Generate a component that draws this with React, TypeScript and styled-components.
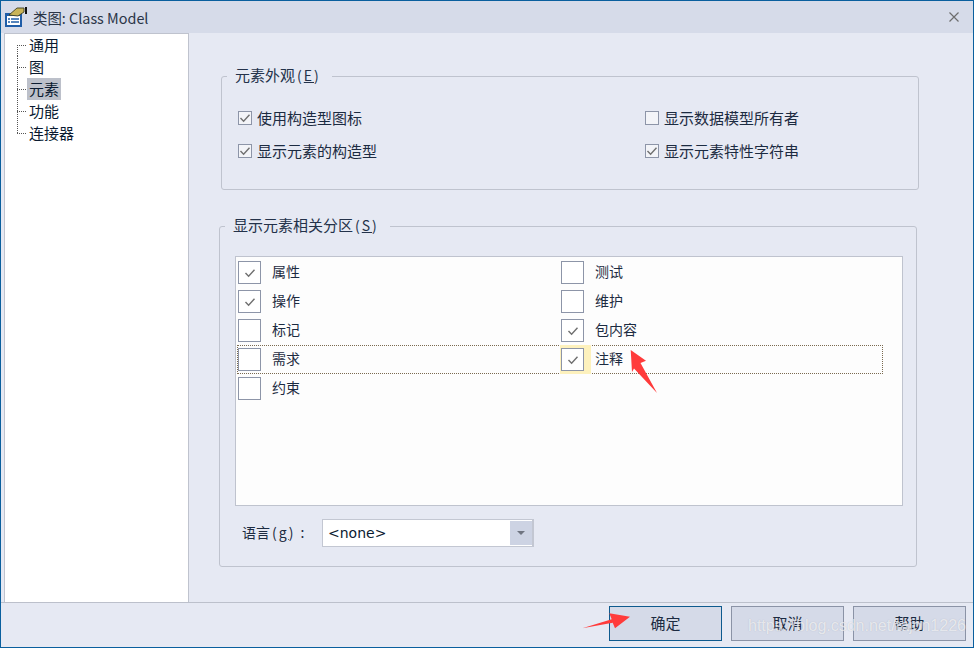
import styled, { createGlobalStyle } from "styled-components";

const GlobalStyle = createGlobalStyle`
  html, body {
    margin: 0;
    padding: 0;
    background: #e6e9f3;
  }
  * {
    box-sizing: border-box;
  }
`;

const Dialog = styled.div`
  position: relative;
  width: 974px;
  height: 648px;
  display: flex;
  flex-direction: column;
  background: #e6e9f3;
  border: 1px solid #0a5f9e;
  color: #1c2b41;
  font-family: "Noto Sans CJK SC", "Liberation Sans", sans-serif;
  font-size: 15px;
  overflow: hidden;
`;
const TitleBar = styled.div`
  height: 32px;
  flex: none;
  display: flex;
  align-items: center;
  padding: 0 14px 0 4px;
  background: #d6dbe9;
`;
const Title = styled.span`
  margin-left: 6px;
  flex: 1;
  color: #2a3547;
  font-family: "Noto Sans CJK SC", "Noto Sans", sans-serif;
  font-size: 14.4px;
`;
const Main = styled.div`
  flex: 1;
  display: flex;
  padding-left: 3px;
  min-height: 0;
`;
const Tree = styled.ul`
  width: 185px;
  flex: none;
  margin: 0;
  padding: 0 0 0 12px;
  list-style: none;
  background: #ffffff;
  border: 1px solid #bfc3ce;
  border-bottom: none;
  color: #0a1a30;
`;
const TreeRow = styled.li`
  height: 22px;
  display: flex;
  align-items: center;
`;
const Connector = styled.span<{ $part: "first" | "middle" | "last" }>`
  width: 10px;
  height: 22px;
  flex: none;
  background-image: repeating-linear-gradient(to right, #555 0 1px, transparent 1px 2px),
    repeating-linear-gradient(to bottom, #555 0 1px, transparent 1px 2px);
  background-repeat: no-repeat;
  background-size: 100% 1px, 1px ${(p) => (p.$part === "middle" ? "22px" : "11px")};
  background-position: 0 11px, 0 ${(p) => (p.$part === "first" ? "11px" : "0")};
`;
const TreeLabel = styled.span<{ $selected?: boolean }>`
  height: 22px;
  padding: 0 2px;
  line-height: 21px;
  background: ${(p) => (p.$selected ? "#bcc0ca" : "transparent")};
`;
const Pane = styled.div`
  flex: 1;
  display: flex;
  flex-direction: column;
`;
const Group = styled.fieldset<{ $left: number; $top: number; $height: number }>`
  width: 698px;
  height: ${(p) => p.$height}px;
  margin: ${(p) => p.$top}px 0 0 ${(p) => p.$left}px;
  padding: 0;
  border: 1px solid #bfc3ce;
  border-radius: 3px;
  min-width: 0;
`;
const Legend = styled.legend<{ $indent: number }>`
  margin-left: ${(p) => p.$indent}px;
  padding: 0 11px 0 8px;
  height: 20px;
  line-height: 18px;
  color: #24324a;
`;
const Mnemonic = styled.span`
  margin-left: 2px;
  letter-spacing: 2px;
  font-size: 14px;
`;
const OptionGrid = styled.div`
  display: grid;
  grid-template-columns: 407px 1fr;
  grid-auto-rows: 33px;
  padding: 15px 0 0 16px;
`;
const Option = styled.label`
  display: flex;
  align-items: center;
  gap: 5px;
  height: 33px;
`;
const OptionText = styled.span`
  padding-bottom: 1px;
`;
const SmallCheck = styled.span`
  width: 14px;
  height: 14px;
  display: flex;
  align-items: center;
  justify-content: center;
  background: #f3f4f8;
  border: 1px solid #8d95a8;
`;
const List = styled.div`
  width: 668px;
  height: 250px;
  margin: 20px 0 0 15px;
  padding: 1px 0 0 1px;
  background: #fdfdfd;
  border: 1px solid #bfc3ce;
`;
const ListRow = styled.div<{ $focused?: boolean }>`
  width: 646px;
  height: 29px;
  display: grid;
  grid-template-columns: 323px 1fr;
  align-items: center;
  border: 1px ${(p) => (p.$focused ? "dotted #7a6a50" : "solid transparent")};
`;
const ListCell = styled.div`
  display: flex;
  align-items: center;
  gap: 11px;
  font-size: 14px;
`;
const ListText = styled.span`
  padding-bottom: 3px;
`;
const BigCheck = styled.span<{ $hot?: boolean }>`
  width: 23px;
  height: 23px;
  flex: none;
  display: flex;
  align-items: center;
  justify-content: center;
  background: #ffffff;
  border: 1px solid #8d95a8;
  box-shadow: ${(p) => (p.$hot ? "2px 0 0 3px #fdf1bd, 4px 0 0 3px #fdf1bd" : "none")};
`;
const LanguageRow = styled.div`
  display: flex;
  align-items: center;
  margin: 13px 0 0 22px;
  height: 28px;
  font-size: 14px;
`;
const LanguageLabel = styled.span`
  width: 80px;
  flex: none;
  padding-bottom: 3px;
`;
const Combo = styled.div`
  width: 212px;
  height: 28px;
  display: flex;
  align-items: stretch;
  background: #ffffff;
  border: 1px solid #c3c7d2;
  border-width: 1px 2px 1px 1px;
`;
const ComboValue = styled.span`
  flex: 1;
  padding-left: 5px;
  line-height: 27px;
  color: #0a1a30;
  font-family: "DejaVu Sans", sans-serif;
  font-size: 14px;
`;
const ComboButton = styled.span`
  width: 22px;
  margin: 1px 0;
  display: flex;
  align-items: center;
  justify-content: center;
  background: #cdd3e3;
`;
const Arrow = styled.span`
  width: 0;
  height: 0;
  border-left: 4px solid transparent;
  border-right: 4px solid transparent;
  border-top: 4px solid #6f7480;
`;
const Footer = styled.div`
  height: 45px;
  flex: none;
  display: flex;
  justify-content: flex-end;
  gap: 9px;
  padding: 3px 7px 0 0;
  border-top: 1px solid #bcc0cb;
`;
const Button = styled.button<{ $primary?: boolean }>`
  width: 113px;
  height: 35px;
  padding: 0 0 3px;
  background: #d5dae8;
  border: 1px solid ${(p) => (p.$primary ? "#0e5a8e" : "#8b93a6")};
  color: #1c2b41;
  font-family: inherit;
  font-size: 15px;
`;
const Watermark = styled.span`
  position: absolute;
  left: 747px;
  top: 616px;
  color: rgba(255, 255, 255, 0.68);
  font-family: "Liberation Sans", sans-serif;
  font-size: 16px;
  text-shadow: 0 0 1px rgba(120, 125, 140, 0.4);
  white-space: nowrap;
`;
const Annotations = styled.svg`
  position: absolute;
  left: -1px;
  top: -1px;
  pointer-events: none;
`;

const Tick = () => (
  <svg width="12" height="12" viewBox="0 0 12 12">
    <path d="M1.5 6 L4.6 9.2 L10.5 2.8" fill="none" stroke="#707070" strokeWidth="1.4" />
  </svg>
);

const AppIcon = () => (
  <svg width="22" height="20" viewBox="0 0 22 20">
    <rect x="0" y="6" width="17" height="14" fill="#1f5da8" />
    <rect x="2" y="9" width="13" height="9" fill="#ffffff" />
    <path d="M3 12h2M6 12h8M3 15h2M6 15h8" stroke="#1f5da8" strokeWidth="1.3" />
    <path d="M4 8 L12 1 L19 1 L19 5 L13 9 Z" fill="#c9b458" stroke="#3f3f22" strokeWidth="0.9" />
    <rect x="20" y="0" width="2" height="7" fill="#111111" />
  </svg>
);

const treeItems = ["通用", "图", "元素", "功能", "连接器"];
const rows = [
  [{ label: "属性", checked: true }, { label: "测试", checked: false }],
  [{ label: "操作", checked: true }, { label: "维护", checked: false }],
  [{ label: "标记", checked: false }, { label: "包内容", checked: true }],
  [{ label: "需求", checked: false }, { label: "注释", checked: true }],
  [{ label: "约束", checked: false }],
];

export default function App() {
  return (
    <>
      <GlobalStyle />
      <Dialog>
        <TitleBar>
          <AppIcon />
          <Title>类图: Class Model</Title>
          <svg width="10" height="10" viewBox="0 0 10 10">
            <path d="M0.5 0.5 L9.5 9.5 M9.5 0.5 L0.5 9.5" stroke="#6d6d6d" strokeWidth="1.2" />
          </svg>
        </TitleBar>
        <Main>
          <Tree>
            {treeItems.map((item, i) => (
              <TreeRow key={item}>
                <Connector $part={i === 0 ? "first" : i === treeItems.length - 1 ? "last" : "middle"} />
                <TreeLabel $selected={item === "元素"}>{item}</TreeLabel>
              </TreeRow>
            ))}
          </Tree>
          <Pane>
            <Group $left={32} $top={33} $height={124}>
              <Legend $indent={5}>
                元素外观<Mnemonic>(<u>E</u>)</Mnemonic>
              </Legend>
              <OptionGrid>
                <Option>
                  <SmallCheck>
                    <Tick />
                  </SmallCheck>
                  <OptionText>使用构造型图标</OptionText>
                </Option>
                <Option>
                  <SmallCheck />
                  <OptionText>显示数据模型所有者</OptionText>
                </Option>
                <Option>
                  <SmallCheck>
                    <Tick />
                  </SmallCheck>
                  <OptionText>显示元素的构造型</OptionText>
                </Option>
                <Option>
                  <SmallCheck>
                    <Tick />
                  </SmallCheck>
                  <OptionText>显示元素特性字符串</OptionText>
                </Option>
              </OptionGrid>
            </Group>
            <Group $left={30} $top={26} $height={351}>
              <Legend $indent={5}>
                显示元素相关分区<Mnemonic>(<u>S</u>)</Mnemonic>
              </Legend>
              <List>
                {rows.map((row, i) => (
                  <ListRow key={i} $focused={i === 3}>
                    {row.map((cell) => (
                      <ListCell key={cell.label}>
                        <BigCheck $hot={cell.label === "注释"}>{cell.checked && <Tick />}</BigCheck>
                        <ListText>{cell.label}</ListText>
                      </ListCell>
                    ))}
                  </ListRow>
                ))}
              </List>
              <LanguageRow>
                <LanguageLabel>
                  语言<Mnemonic>(<u>g</u>) :</Mnemonic>
                </LanguageLabel>
                <Combo>
                  <ComboValue>&lt;none&gt;</ComboValue>
                  <ComboButton>
                    <Arrow />
                  </ComboButton>
                </Combo>
              </LanguageRow>
            </Group>
          </Pane>
        </Main>
        <Footer>
          <Button $primary>确定</Button>
          <Button>取消</Button>
          <Button>帮助</Button>
        </Footer>
        <Watermark>https://blog.csdn.net/tajon1226</Watermark>
        <Annotations width="974" height="648">
          <polygon points="630.7,350 646,360.7 640.5,363 657,393 634,368.5 632,372" fill="#ff3b3b" />
          <polygon points="582.3,628.3 611.7,619.3 609.3,613.3 630,616.7 615,628.3 612.7,622.7" fill="#ff3b3b" />
        </Annotations>
      </Dialog>
    </>
  );
}
